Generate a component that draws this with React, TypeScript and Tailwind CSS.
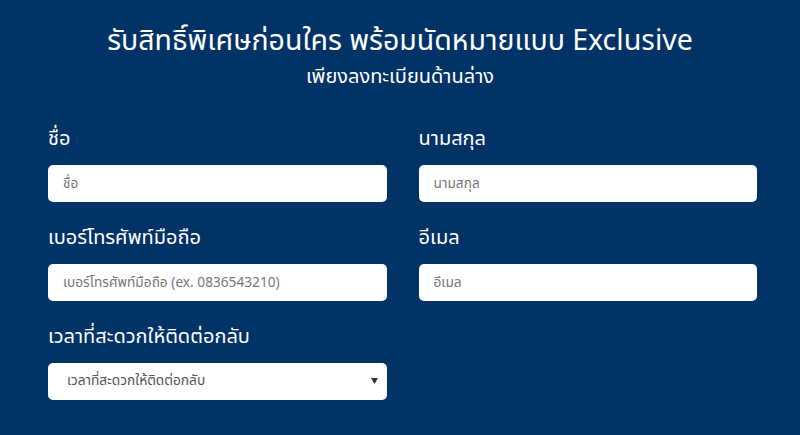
import React from "react";

const font = { fontFamily: '"Noto Sans Thai", "Noto Sans", "Liberation Sans", sans-serif' };

function Field({ label, placeholder }: { label: string; placeholder: string }) {
  return (
    <div className="flex flex-col">
      <div className="text-white text-[20px] leading-[28px] h-[28px] mb-[12px]">{label}</div>
      <input
        className="h-[37px] w-full rounded-[5px] bg-white px-[15px] text-[13.7px] text-gray-700 placeholder:text-[#777] outline-none"
        placeholder={placeholder}
        style={font}
      />
    </div>
  );
}

export default function App() {
  return (
    <div className="w-[800px] h-[435px] bg-[#013366] overflow-hidden" style={font}>
      <div className="pt-[23px] text-center text-white">
        <div className="text-[28.5px] leading-[38px]">รับสิทธิ์พิเศษก่อนใคร พร้อมนัดหมายแบบ Exclusive</div>
        <div className="text-[20px] leading-[30px] mt-[1px]">เพียงลงทะเบียนด้านล่าง</div>
      </div>
      <div className="mt-[33px] pl-[48px] w-[757px] grid grid-cols-2 gap-x-[32px] gap-y-[22px]">
        <Field label="ชื่อ" placeholder="ชื่อ" />
        <Field label="นามสกุล" placeholder="นามสกุล" />
        <Field label="เบอร์โทรศัพท์มือถือ" placeholder="เบอร์โทรศัพท์มือถือ (ex. 0836543210)" />
        <Field label="อีเมล" placeholder="อีเมล" />
        <div className="flex flex-col">
          <div className="text-white text-[20px] leading-[28px] h-[28px] mb-[12px]">เวลาที่สะดวกให้ติดต่อกลับ</div>
          <div className="relative h-[37px] w-full rounded-[5px] bg-white flex items-center pl-[19px] pr-[15px] text-[13.7px] text-[#555]">
            <span>เวลาที่สะดวกให้ติดต่อกลับ</span>
            <svg className="absolute right-[9px] top-[15px]" width="7" height="6" viewBox="0 0 7 6">
              <path d="M0 0 H7 L3.5 6 Z" fill="#333" />
            </svg>
          </div>
        </div>
      </div>
    </div>
  );
}
